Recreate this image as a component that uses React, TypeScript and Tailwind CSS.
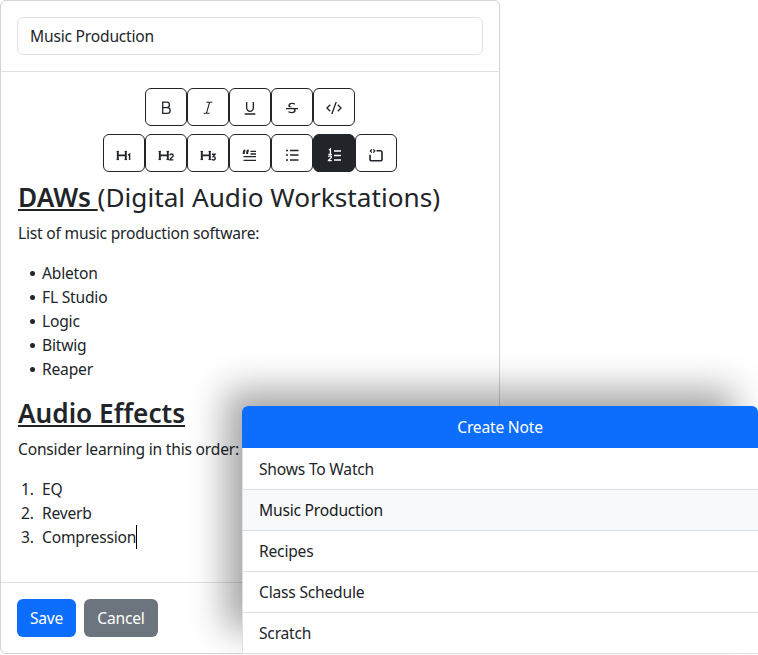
import { RiUnderline, RiStrikethrough, RiCodeSSlashLine } from "react-icons/ri";
import type { ReactNode } from "react";

function ToolButton({ children, active }: { children: ReactNode; active?: boolean }) {
  return (
    <button
      className={
        active
          ? "flex h-[38px] w-[42px] items-center justify-center rounded-md border border-[#212529] bg-[#212529] text-white"
          : "flex h-[38px] w-[42px] items-center justify-center rounded-md border border-[#212529] bg-white text-[#212529]"
      }
    >
      {children}
    </button>
  );
}

function Glyph({ children }: { children: ReactNode }) {
  return (
    <svg width="16" height="16" viewBox="0 0 16 16" fill="none" stroke="currentColor" strokeWidth="1.3" className="overflow-visible">
      {children}
    </svg>
  );
}

const heading = "M1.8 6v9M9.8 6v9M1.8 10.4h8";
const serifs = "M.6 6.4h2.4M8.6 6.4h2.4M.6 14.6h2.4M8.6 14.6h2.4";

function HeadingIcon({ digit }: { digit: string }) {
  return (
    <Glyph>
      <path d={heading} strokeWidth="1.9" />
      <path d={serifs} strokeWidth="1" />
      <path d={digit} strokeWidth="1.4" />
    </Glyph>
  );
}

const notes = ["Shows To Watch", "Music Production", "Recipes", "Class Schedule", "Scratch"];

export default function App() {
  return (
    <div className="relative h-[655px] w-[758px] overflow-hidden bg-white font-['Noto_Sans',sans-serif] text-[15.6px] leading-6 tracking-[-0.2px] text-[#212529]">
      {/* Editor card */}
      <div className="flex h-[654px] w-[500px] flex-col rounded-md border border-[#d3d4d5]">
        <div className="border-b border-[#dee2e6] p-4">
          <input
            readOnly
            value="Music Production"
            className="block h-[38px] w-full rounded-md border border-[#dee2e6] px-3 tracking-[-0.2px] text-[#212529] outline-none"
          />
        </div>

        <div className="flex-1 pl-[17px] pr-4 pt-4">
          {/* Toolbar */}
          <div className="-ml-px flex flex-col items-center gap-2">
            <div className="flex">
              <ToolButton>
                <Glyph>
                  <path d="M4.7 3.2h4a2.7 2.7 0 0 1 0 5.4h-4zM4.7 8.6h4.6a2.9 2.9 0 0 1 0 5.8H4.7z" />
                </Glyph>
              </ToolButton>
              <ToolButton>
                <Glyph>
                  <path d="M6.4 3.3h6M3.6 14.3h6M9.6 3.3 6.4 14.3" strokeWidth="1.1" />
                </Glyph>
              </ToolButton>
              <ToolButton>
                <RiUnderline size={16} className="mt-[2px]" />
              </ToolButton>
              <ToolButton>
                <RiStrikethrough size={16} className="mt-[2px]" />
              </ToolButton>
              <ToolButton>
                <RiCodeSSlashLine size={16} className="mt-[2px]" />
              </ToolButton>
            </div>
            <div className="flex">
              <ToolButton>
                <HeadingIcon digit="M12 10.2 13.6 9v6" />
              </ToolButton>
              <ToolButton>
                <HeadingIcon digit="M11.8 10.4c.2-1.9 3.4-1.9 3.4 0 0 1.6-2.7 2.7-3.4 4.5h3.6" />
              </ToolButton>
              <ToolButton>
                <HeadingIcon digit="M11.9 9.3H15l-1.7 2.200c2.500-.2 2.600 3.500 0 3.500-.7 0-1.200-.3-1.500-.8" />
              </ToolButton>
              <ToolButton>
                <Glyph>
                  <path d="M1.800 9V7.200c0-1 .5-1.700 1.500-2M5.200 9V7.200c0-1 .5-1.700 1.500-2" strokeWidth="2" />
                  <path d="M8.500 6.400H14M8.500 9H14M1.500 11.600H14M1.500 15.400H14" />
                </Glyph>
              </ToolButton>
              <ToolButton>
                <Glyph>
                  <path d="M2 5.500h2M2 10h2M2 15h2" strokeWidth="1.300" />
                  <path d="M6 5.500h8.500M6 10h8.500M6 15h8.500" />
                </Glyph>
              </ToolButton>
              <ToolButton active>
                <Glyph>
                  <path d="M2.800 5 4.400 4v5.500M2.400 9.500h3.400" strokeWidth="1.300" />
                  <path d="M2.500 12c.2-1.500 3-1.500 3 0 0 1.300-2.200 2-3 3.600h3.300" strokeWidth="1.300" />
                  <path d="M8 6h7M8 10.500h7M8 15h7" strokeWidth="1.600" />
                </Glyph>
              </ToolButton>
              <ToolButton>
                <Glyph>
                  <path d="M8.500 5.800H12.500a1.500 1.500 0 0 1 1.500 1.500V14.300a1.500 1.500 0 0 1-1.500 1.500h-9A1.500 1.500 0 0 1 2 14.300v-4.500" strokeWidth="1.600" />
                  <path d="M3.900 4.400 2.300 6l1.600 1.600M5.300 4.400 6.900 6 5.300 7.600" strokeWidth="1.200" />
                </Glyph>
              </ToolButton>
            </div>
          </div>

          {/* Note content */}
          <h2 className="mb-2 mt-[10px] text-[26.2px] leading-[31px] tracking-normal">
            <strong className="font-semibold underline">DAWs </strong>(Digital Audio Workstations)
          </h2>
          <p className="mb-4">List of music production software:</p>
          <ul className="mb-4">
            {["Ableton", "FL Studio", "Logic", "Bitwig", "Reaper"].map((item) => (
              <li key={item} className="flex">
                <span className="flex w-6 items-center justify-end pr-[7px]">
                  <span className="h-[5px] w-[5px] rounded-full bg-[#212529]" />
                </span>
                {item}
              </li>
            ))}
          </ul>
          <h2 className="mb-2 text-[26.2px] leading-[32px] tracking-normal">
            <strong className="font-semibold underline">Audio Effects</strong>
          </h2>
          <p className="mb-4">Consider learning in this order:</p>
          <ol>
            <li className="flex">
              <span className="w-6 pl-[3px]">1.</span>EQ
            </li>
            <li className="flex">
              <span className="w-6 pl-[3px]">2.</span>Reverb
            </li>
            <li className="flex">
              <span className="w-6 pl-[3px]">3.</span>
              <span className="border-r border-black">Compression</span>
            </li>
          </ol>
        </div>

        <div className="flex gap-2 border-t border-[#dee2e6] p-4">
          <button className="h-[38px] w-[59px] rounded-md bg-[#0d6efd] text-white">Save</button>
          <button className="h-[38px] w-[74px] rounded-md bg-[#6c757d] text-white">Cancel</button>
        </div>
      </div>

      {/* Create note popup */}
      <div className="absolute left-[242px] top-[406px] w-[516px] rounded-t-md shadow-[-20px_-20px_36px_-4px_rgba(0,0,0,0.36)]">
        <div className="flex h-[42px] items-center justify-center rounded-t-md bg-[#0d6efd] text-white">
          Create Note
        </div>
        <ul className="border-l border-[#dee2e6] bg-white pt-px">
          {notes.map((note, i) => (
            <li
              key={note}
              className={
                i === 1
                  ? "flex h-[41px] items-center border-b border-[#dee2e6] bg-[#f8f9fa] pl-4 text-[#16181b]"
                  : "flex h-[41px] items-center border-b border-[#dee2e6] pl-4"
              }
            >
              {note}
            </li>
          ))}
        </ul>
      </div>
    </div>
  );
}
